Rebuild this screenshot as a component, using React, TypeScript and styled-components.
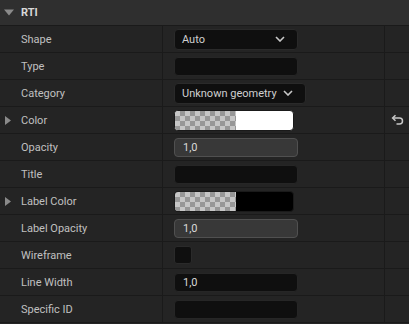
import React from "react";
import styled, { createGlobalStyle } from "styled-components";

const GlobalStyle = createGlobalStyle`
  html, body { margin: 0; padding: 0; background: #242424; }
  body { font-family: Roboto, "Noto Sans", "Liberation Sans", sans-serif; }
`;

const Panel = styled.div`
  width: 409px;
  background: #242424;
  color: #c0c0c0;
  font-size: 11px;
`;

const Header = styled.div`
  height: 25px;
  border-bottom: 1px solid #1a1a1a;
  background: #2f2f2f;
  display: flex;
  align-items: center;
  gap: 7px;
  padding-left: 4px;
  font-weight: 700;
  color: #d8d8d8;
`;

const Row = styled.div`
  display: grid;
  grid-template-columns: 163px 222px 1fr;
  height: 26px;
  border-bottom: 1px solid #1a1a1a;
`;

const LabelCell = styled.div`
  border-right: 1px solid #1a1a1a;
  display: flex;
  align-items: center;
  padding-left: 5px;
  gap: 5px;
`;

const Spacer = styled.span`
  width: 11px;
  display: inline-flex;
  align-items: center;
`;

const ValueCell = styled.div`
  border-right: 1px solid #1a1a1a;
  display: flex;
  align-items: center;
  padding-left: 11px;
`;

const ResetCell = styled.div`
  display: flex;
  align-items: center;
  padding-left: 6px;
`;

const Dropdown = styled.div<{ $w?: number }>`
  box-sizing: border-box;
  height: 21px;
  width: ${(p) => (p.$w ? `${p.$w}px` : "auto")};
  background: #0f0f0f;
  border: 1px solid #2a2a2a;
  border-radius: 4px;
  display: flex;
  align-items: center;
  justify-content: space-between;
  padding: 0 12px 0 7px;
  gap: 6px;
  color: #d0d0d0;
`;

const TextField = styled.div<{ $num?: boolean }>`
  box-sizing: border-box;
  height: 19px;
  width: 124px;
  background: ${(p) => (p.$num ? "#383838" : "#0f0f0f")};
  border: 1px solid ${(p) => (p.$num ? "#505050" : "#262626")};
  border-radius: 4px;
  display: flex;
  align-items: center;
  padding-left: 8px;
  color: #d8d8d8;
`;

const Swatch = styled.div<{ $color: string }>`
  box-sizing: border-box;
  height: 21px;
  width: 120px;
  border-radius: 4px;
  overflow: hidden;
  display: flex;
  border: 1px solid #1a1a1a;
  background: ${(p) => p.$color};
`;

const Checker = styled.div`
  width: 61px;
  height: 100%;
  background-color: #c6c6c6;
  background-image:
    linear-gradient(45deg, #979797 25%, transparent 25%, transparent 75%, #979797 75%),
    linear-gradient(45deg, #979797 25%, transparent 25%, transparent 75%, #979797 75%);
  background-size: 10px 10px;
  background-position: 0 0, 5px 5px;
`;

const CheckBox = styled.div`
  box-sizing: border-box;
  width: 18px;
  height: 18px;
  background: #0f0f0f;
  border: 1px solid #2a2a2a;
  border-radius: 3px;
`;

const Chevron = () => (
  <svg width="10" height="6" viewBox="0 0 10 6">
    <path d="M1 1 L5 5 L9 1" fill="none" stroke="#c8c8c8" strokeWidth="1.6" />
  </svg>
);

const TriDown = () => (
  <svg width="10" height="7" viewBox="0 0 10 7">
    <path d="M0 0.5 H10 L5 6.5 Z" fill="#8a8a8a" />
  </svg>
);

const TriRight = () => (
  <svg width="6" height="9" viewBox="0 0 6 9">
    <path d="M0 0 L6 4.5 L0 9 Z" fill="#8a8a8a" />
  </svg>
);

const ResetIcon = () => (
  <svg width="13" height="12" viewBox="0 0 13 12">
    <path d="M2 4 H8.5 A3 3 0 0 1 8.5 10 H5.5" fill="none" stroke="#c8c8c8" strokeWidth="1.5" />
    <path d="M4.5 1.2 L1.6 4 L4.5 6.8" fill="none" stroke="#c8c8c8" strokeWidth="1.5" />
  </svg>
);

type Prop = {
  label: string;
  expandable?: boolean;
  value: React.ReactNode;
  reset?: boolean;
};

const props: Prop[] = [
  { label: "Shape", value: <Dropdown $w={124}><span>Auto</span><Chevron /></Dropdown> },
  { label: "Type", value: <TextField /> },
  { label: "Category", value: <Dropdown><span>Unknown geometry</span><Chevron /></Dropdown> },
  { label: "Color", expandable: true, reset: true, value: <Swatch $color="#ffffff"><Checker /></Swatch> },
  { label: "Opacity", value: <TextField $num>1,0</TextField> },
  { label: "Title", value: <TextField /> },
  { label: "Label Color", expandable: true, value: <Swatch $color="#000000"><Checker /></Swatch> },
  { label: "Label Opacity", value: <TextField $num>1,0</TextField> },
  { label: "Wireframe", value: <CheckBox /> },
  { label: "Line Width", value: <TextField>1,0</TextField> },
  { label: "Specific ID", value: <TextField /> },
];

export default function App() {
  return (
    <>
      <GlobalStyle />
      <Panel>
        <Header>
          <TriDown />
          <span>RTI</span>
        </Header>
        {props.map((p) => (
          <Row key={p.label}>
            <LabelCell>
              <Spacer>{p.expandable ? <TriRight /> : null}</Spacer>
              <span>{p.label}</span>
            </LabelCell>
            <ValueCell>{p.value}</ValueCell>
            <ResetCell>{p.reset ? <ResetIcon /> : null}</ResetCell>
          </Row>
        ))}
      </Panel>
    </>
  );
}
